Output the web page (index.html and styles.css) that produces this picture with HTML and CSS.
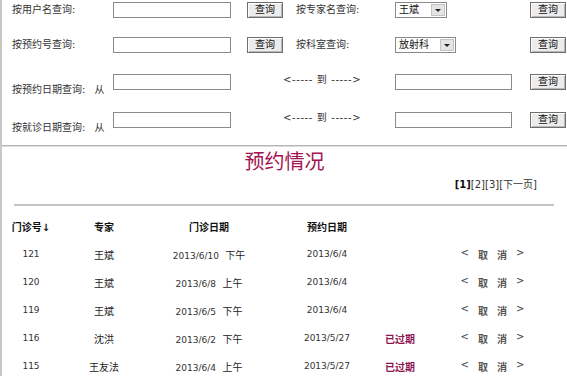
FILE: index.html
```html
<!DOCTYPE html>
<html>
<head>
<meta charset="utf-8">
<link rel="stylesheet" href="styles.css">
</head>
<body>
<div class="page">
  <div class="form">
    <div class="frow">
      <span class="lbl">按用户名查询:</span>
      <span><span class="inp w118"></span></span>
      <span><span class="btn">查询</span></span>
      <span class="lbl">按专家名查询:</span>
      <span><span class="sel w52"><span class="selv">王斌</span><span class="arr"><span class="tri"></span></span></span></span>
      <span><span class="btn">查询</span></span>
    </div>
    <div class="frow r2">
      <span class="lbl">按预约号查询:</span>
      <span><span class="inp w118"></span></span>
      <span><span class="btn">查询</span></span>
      <span class="lbl">按科室查询:</span>
      <span><span class="sel w61"><span class="selv">放射科</span><span class="arr"><span class="tri"></span></span></span></span>
      <span><span class="btn">查询</span></span>
    </div>
    <div class="frow r3">
      <span class="lbl low">按预约日期查询:<span class="from">从</span></span>
      <span><span class="inp w118"></span></span>
      <span class="range">&lt;----- 到 -----&gt;</span>
      <span><span class="inp w117"></span></span>
      <span><span class="btn">查询</span></span>
    </div>
    <div class="frow r4">
      <span class="lbl low">按就诊日期查询:<span class="from">从</span></span>
      <span><span class="inp w118"></span></span>
      <span class="range">&lt;----- 到 -----&gt;</span>
      <span><span class="inp w117"></span></span>
      <span><span class="btn">查询</span></span>
    </div>
  </div>

  <div class="rule"></div>
  <h1 class="title">预约情况</h1>
  <div class="pager"><b>[1]</b>[2][3][下一页]</div>
  <div class="rule2"></div>

  <div class="table">
    <div class="trow thead">
      <span>门诊号↓</span><span>专家</span><span>门诊日期</span><span>预约日期</span><span></span><span></span>
    </div>
    <div class="trow">
      <span class="num">121</span><span>王斌</span><span><span class="num">2013/6/10</span>&nbsp;&nbsp;下午</span><span class="num">2013/6/4</span><span></span>
      <span class="act"><i class="ang">&lt;</i><i>取</i><i>消</i><i class="ang">&gt;</i></span>
    </div>
    <div class="trow">
      <span class="num">120</span><span>王斌</span><span><span class="num">2013/6/8</span>&nbsp;&nbsp;上午</span><span class="num">2013/6/4</span><span></span>
      <span class="act"><i class="ang">&lt;</i><i>取</i><i>消</i><i class="ang">&gt;</i></span>
    </div>
    <div class="trow">
      <span class="num">119</span><span>王斌</span><span><span class="num">2013/6/5</span>&nbsp;&nbsp;下午</span><span class="num">2013/6/4</span><span></span>
      <span class="act"><i class="ang">&lt;</i><i>取</i><i>消</i><i class="ang">&gt;</i></span>
    </div>
    <div class="trow">
      <span class="num">116</span><span>沈洪</span><span><span class="num">2013/6/2</span>&nbsp;&nbsp;下午</span><span class="num">2013/5/27</span><span class="expired">已过期</span>
      <span class="act"><i class="ang">&lt;</i><i>取</i><i>消</i><i class="ang">&gt;</i></span>
    </div>
    <div class="trow">
      <span class="num">115</span><span>王友法</span><span><span class="num">2013/6/4</span>&nbsp;&nbsp;上午</span><span class="num">2013/5/27</span><span class="expired">已过期</span>
      <span class="act"><i class="ang">&lt;</i><i>取</i><i>消</i><i class="ang">&gt;</i></span>
    </div>
  </div>
</div>
</body>
</html>
```
FILE: styles.css
```css
* { box-sizing: border-box; }
html, body { margin: 0; padding: 0; background: #fff; }
body {
  width: 567px;
  height: 376px;
  overflow: hidden;
  font-family: "DejaVu Sans", "Noto Sans CJK SC", sans-serif;
  font-size: 10px;
  color: #222;
}
.page {
  border-left: 2px solid #c8c8c8;
  min-height: 376px;
  padding-top: 2px;
}
.form { padding-left: 10px; }
.frow {
  display: grid;
  grid-template-columns: 101px 134px 49px 99px 135px 35px;
  align-items: center;
  height: 16px;
}
.r2 { margin-top: 19px; }
.r3 { margin-top: 21px; height: auto; align-items: start; }
.r4 { margin-top: 16px; height: auto; align-items: start; }
.lbl { line-height: 12px; color: #333; white-space: nowrap; }
.low { padding-top: 10px; }
.from { margin-left: 9px; }
.range {
  grid-column: 3 / 5;
  padding-left: 36px;
  line-height: 12px;
  color: #333;
  white-space: nowrap;
  letter-spacing: 0.6px;
}
.inp {
  display: block;
  height: 16px;
  border: 1px solid #8a8a8a;
  background: #fff;
}
.w118 { width: 118px; }
.w117 { width: 117px; }
.btn {
  display: block;
  width: 36px;
  height: 16px;
  border: 1px solid #6f6f6f;
  background: #ececec;
  box-shadow: inset 1px 1px 0 #fff, inset -1px -1px 0 #b8b8b8;
  text-align: center;
  line-height: 14px;
  font-size: 10px;
  color: #111;
}
.sel {
  display: flex;
  height: 16px;
  border: 1px solid #8a8a8a;
  background: #fff;
}
.w52 { width: 52px; }
.w61 { width: 61px; }
.selv { flex: 1; line-height: 14px; padding-left: 3px; color: #111; }
.arr {
  width: 14px;
  margin: 1px;
  background: #e4e4e4;
  border: 1px solid #c4c4c4;
  display: flex;
  align-items: center;
  justify-content: center;
}
.tri {
  width: 0;
  height: 0;
  border-left: 3px solid transparent;
  border-right: 3px solid transparent;
  border-top: 3px solid #222;
}
.rule {
  margin-top: 11px;
  height: 2px;
  border-top: 1px solid #b4b4b4;
  border-bottom: 1px solid #dedede;
}
.title {
  margin: 2px 0 0;
  height: 24px;
  line-height: 24px;
  font-size: 20px;
  font-weight: normal;
  text-align: center;
  color: #a3134f;
  font-family: "Noto Sans CJK SC", sans-serif;
}
.pager {
  margin-top: 6px;
  line-height: 12px;
  font-size: 10px;
  text-align: right;
  padding-right: 30px;
  color: #333;
}
.pager b { color: #111; }
.rule2 {
  margin: 13px 13px 0 12px;
  height: 2px;
  background: #c4c4c4;
}
.table { margin-top: 6px; }
.trow {
  display: grid;
  grid-template-columns: 58px 88px 122px 114px 32px 153px;
  height: 28px;
  align-items: center;
  text-align: center;
  white-space: nowrap;
  color: #222;
}
.thead { font-weight: bold; color: #111; }
.num { font-size: 9px; color: #333; }
.expired { font-weight: bold; color: #8e1450; }
.act {
  display: flex;
  justify-content: center;
  gap: 9px;
  color: #555;
  font-weight: bold;
}
.act i { font-style: normal; }
.act .ang { font-weight: normal; color: #444; }
```
